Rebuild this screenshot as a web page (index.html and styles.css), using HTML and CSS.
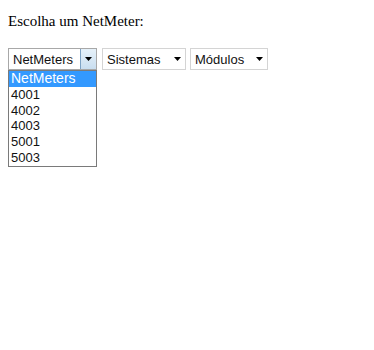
FILE: index.html
```html
<!DOCTYPE html>
<html lang="pt">
<head>
    <meta charset="UTF-8">
    <meta name="viewport" content="width=device-width, initial-scale=1.0">
    <title>NetMeter</title>
    <link rel="stylesheet" href="styles.css">
</head>
<body>
    <p class="title">Escolha um NetMeter:</p>

    <div class="form-row">
        <div class="selects">
            <div class="select open">
                <span class="value">NetMeters</span>
                <span class="btn">
                    <svg width="7" height="4" viewBox="0 0 7 4"><path d="M0 0H7L3.5 4Z" fill="#000"/></svg>
                </span>
            </div>
            <div class="select sistemas">
                <span class="value">Sistemas</span>
                <span class="btn">
                    <svg width="7" height="4" viewBox="0 0 7 4"><path d="M0 0H7L3.5 4Z" fill="#000"/></svg>
                </span>
            </div>
            <div class="select modulos">
                <span class="value">Módulos</span>
                <span class="btn">
                    <svg width="7" height="4" viewBox="0 0 7 4"><path d="M0 0H7L3.5 4Z" fill="#000"/></svg>
                </span>
            </div>
        </div>
        <div class="dropdown-list">
            <div class="item current">NetMeters</div>
            <div class="item">4001</div>
            <div class="item">4002</div>
            <div class="item">4003</div>
            <div class="item">5001</div>
            <div class="item">5003</div>
        </div>
    </div>
</body>
</html>
```
FILE: styles.css
```css
body {
    font-family: "Liberation Serif", serif;
    margin: 8px;
    background: #fff;
}
.title {
    font-size: 15px;
    margin: 5px 0 0 0;
    color: #000;
}
.form-row {
    margin-top: 18px;
    font-family: "Liberation Sans", Arial, sans-serif;
    font-size: 13px;
}
.selects {
    display: flex;
    gap: 4px;
}
.select {
    display: flex;
    align-items: center;
    height: 22px;
    box-sizing: border-box;
    border: 1px solid #d4d4d4;
    background: #fff;
}
.select .value {
    flex: 1;
    padding-left: 4px;
    color: #111;
}
.select .btn {
    width: 15px;
    height: 20px;
    display: flex;
    align-items: center;
    justify-content: center;
}
.open {
    width: 89px;
    border-color: #a8a8a8;
}
.open .btn {
    background: linear-gradient(#e6f1f9, #c9def0);
    border-left: 1px solid #7da2c4;
}
.sistemas {
    width: 84px;
    margin-left: 1px;
}
.modulos {
    width: 78px;
}
.dropdown-list {
    width: 89px;
    box-sizing: border-box;
    border: 1px solid #7a7a7a;
    background: #fff;
}
.item {
    height: 15.8px;
    line-height: 15.8px;
    padding-left: 2px;
    color: #111;
}
.item.current {
    background: #3399ff;
    color: #fff;
    font-size: 14px;
}
```
